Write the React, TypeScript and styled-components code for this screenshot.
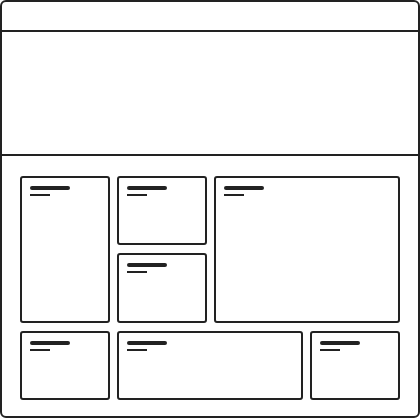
import React from "react";
import styled, { createGlobalStyle } from "styled-components";

const Global = createGlobalStyle`
  html, body { margin: 0; padding: 0; background: #ffffff; }
  * { box-sizing: border-box; }
  body { font-family: "Liberation Sans", Arial, sans-serif; }
`;

const INK = "#222222";

const Frame = styled.div`
  width: 420px;
  height: 418px;
  border: 2px solid ${INK};
  border-radius: 6px;
  display: flex;
  flex-direction: column;
  overflow: hidden;
  background: #fff;
`;

const Header = styled.header`
  height: 30px;
  flex: none;
  border-bottom: 2px solid ${INK};
`;

const Hero = styled.section`
  height: 124px;
  flex: none;
  border-bottom: 2px solid ${INK};
`;

const Grid = styled.main`
  flex: 1;
  padding: 20px 18px 16px;
  display: grid;
  grid-template-columns: repeat(4, 1fr);
  grid-template-rows: repeat(3, 1fr);
  column-gap: 7px;
  row-gap: 8px;
`;

const Card = styled.div<{ $col: string; $row: string }>`
  grid-column: ${(p) => p.$col};
  grid-row: ${(p) => p.$row};
  border: 2px solid ${INK};
  border-radius: 3px;
  padding: 8px;
  display: flex;
  flex-direction: column;
  gap: 4px;
`;

const TitleBar = styled.div`
  width: 40px;
  height: 4px;
  border-radius: 2px;
  background: ${INK};
`;

const SubBar = styled.div`
  width: 20px;
  height: 2px;
  background: ${INK};
`;

const cards: { col: string; row: string }[] = [
  { col: "1", row: "1 / span 2" },
  { col: "2", row: "1" },
  { col: "3 / span 2", row: "1 / span 2" },
  { col: "2", row: "2" },
  { col: "1", row: "3" },
  { col: "2 / span 2", row: "3" },
  { col: "4", row: "3" },
];

export default function App() {
  return (
    <>
      <Global />
      <Frame>
        <Header />
        <Hero />
        <Grid>
          {cards.map((c, i) => (
            <Card key={i} $col={c.col} $row={c.row}>
              <TitleBar />
              <SubBar />
            </Card>
          ))}
        </Grid>
      </Frame>
    </>
  );
}
